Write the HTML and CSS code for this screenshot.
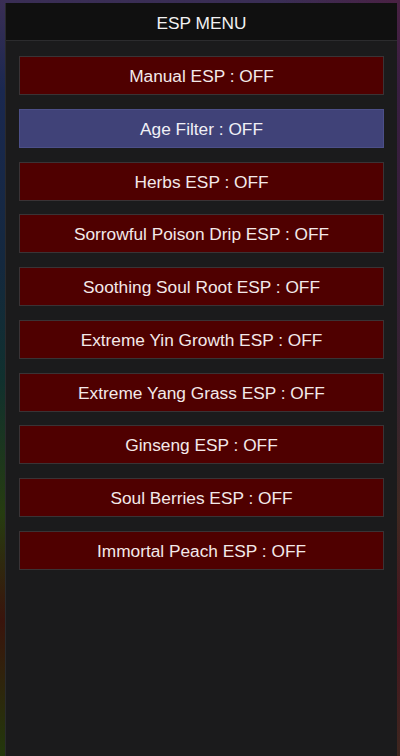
FILE: index.html
```html
<!DOCTYPE html>
<html lang="en">
<head>
<meta charset="utf-8">
<title>ESP MENU</title>
<link rel="stylesheet" href="styles.css">
</head>
<body>
<div class="panel">
  <div class="titlebar">ESP MENU</div>
  <div class="menu">
    <div class="btn">Manual ESP : OFF</div>
    <div class="btn active">Age Filter : OFF</div>
    <div class="btn">Herbs ESP : OFF</div>
    <div class="btn">Sorrowful Poison Drip ESP : OFF</div>
    <div class="btn">Soothing Soul Root ESP : OFF</div>
    <div class="btn">Extreme Yin Growth ESP : OFF</div>
    <div class="btn">Extreme Yang Grass ESP : OFF</div>
    <div class="btn">Ginseng ESP : OFF</div>
    <div class="btn">Soul Berries ESP : OFF</div>
    <div class="btn">Immortal Peach ESP : OFF</div>
  </div>
</div>
</body>
</html>
```

FILE: styles.css
```css
html, body {
  margin: 0;
  padding: 0;
  height: 756px;
  overflow: hidden;
}
body {
  background:
    linear-gradient(90deg, rgba(0,0,0,0) 0%, rgba(0,0,0,0) 70%, rgba(90,20,50,0.5) 100%),
    linear-gradient(180deg, #3a2e55 0%, #1a2850 12%, #14283e 35%, #10302e 50%, #263c10 68%, #3a140c 82%, #22380c 100%);
  font-family: "Liberation Sans", Arial, sans-serif;
  padding: 3px 3px 0 5px;
  box-sizing: border-box;
}
.panel {
  width: 392px;
  height: 753px;
  background: #1b1b1c;
  border-left: 1px solid #2a2a2c;
  box-sizing: border-box;
  display: flex;
  flex-direction: column;
}
.titlebar {
  height: 38px;
  box-sizing: border-box;
  background: #101010;
  border-bottom: 1px solid #2c2c2e;
  color: #f2f2f2;
  font-size: 17.3px;
  display: flex;
  align-items: center;
  justify-content: center;
  padding-top: 3px;
}
.menu {
  display: flex;
  flex-direction: column;
  gap: 13.75px;
  padding: 15px 13px 0 13px;
}
.btn {
  height: 39px;
  box-sizing: border-box;
  background: #4f0000;
  border: 1px solid #3a3335;
  color: #f3e9e9;
  font-size: 17.3px;
  display: flex;
  align-items: center;
  justify-content: center;
  padding-top: 2px;
}
.btn.active {
  background: #404278;
  border-color: #4c4f88;
  color: #f0f0f6;
}
```
